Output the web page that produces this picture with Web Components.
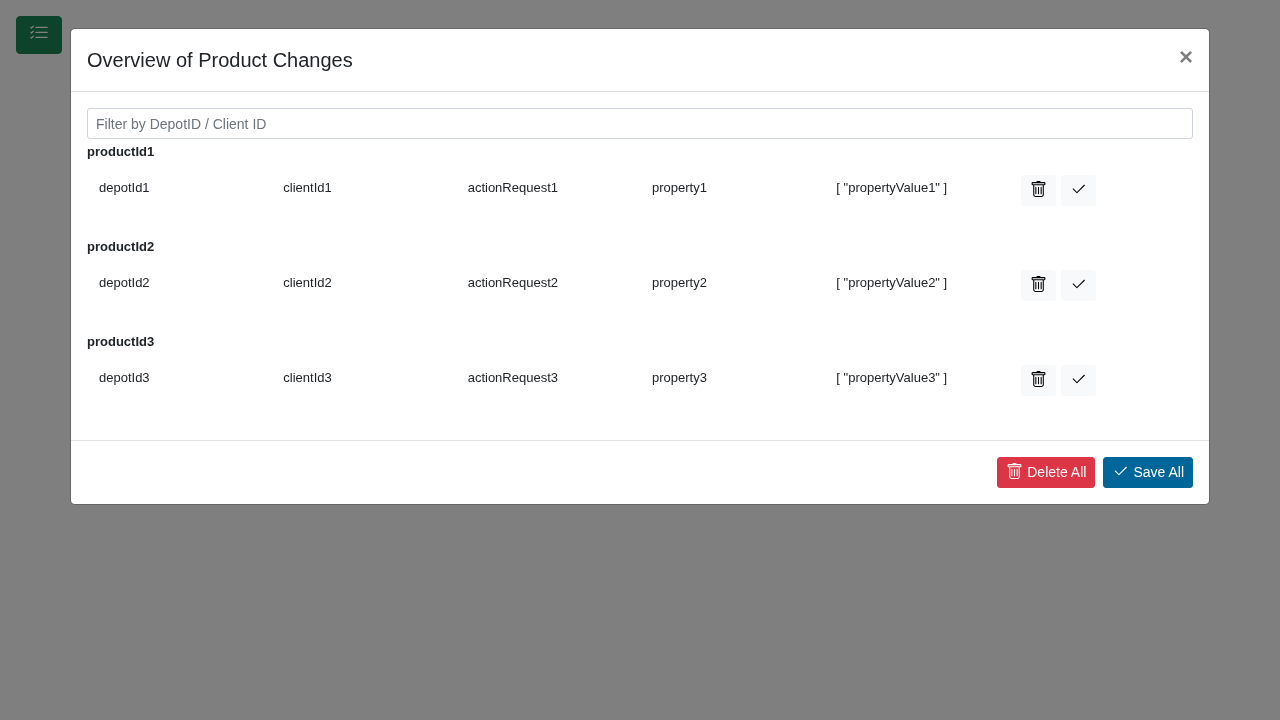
<!DOCTYPE html>
<html lang="en">
<head>
<meta charset="utf-8">
<meta name="viewport" content="width=device-width, initial-scale=1">
<title>Product Changes</title>
<style>
  body {
    margin: 0;
    padding: 16px;
    background: #fff;
    color: #212529;
    font: 16px/24px "Liberation Sans", Arial, sans-serif;
  }
</style>
</head>
<body>
<ui-button variant="success" label="Show product changes"><ui-icon name="list-check" size="large"></ui-icon></ui-button>

<modal-dialog heading="Overview of Product Changes">
  <filter-field placeholder="Filter by DepotID / Client ID"></filter-field>
  <product-group index="1"></product-group>
  <product-group index="2"></product-group>
  <product-group index="3"></product-group>
  <ui-button slot="footer" size="small" variant="danger"><ui-icon name="trash" leading></ui-icon>Delete All</ui-button>
  <ui-button slot="footer" size="small" variant="primary"><ui-icon name="check" leading></ui-icon>Save All</ui-button>
</modal-dialog>

<script>
  const define = (name, render) => customElements.define(name, class extends HTMLElement {
    connectedCallback() {
      if (this.shadowRoot) return;
      const template = document.createElement('template');
      template.innerHTML = render(this);
      this.attachShadow({ mode: 'open' }).append(template.content.cloneNode(true));
    }
  });

  const icons = {
    'trash': 'M5.5 5.5A.5.5 0 0 1 6 6v6a.5.5 0 0 1-1 0V6a.5.5 0 0 1 .5-.5zm2.5 0a.5.5 0 0 1 .5.5v6a.5.5 0 0 1-1 0V6a.5.5 0 0 1 .5-.5zm3 .5a.5.5 0 0 0-1 0v6a.5.5 0 0 0 1 0V6zM14.5 3a1 1 0 0 1-1 1H13v9a2 2 0 0 1-2 2H5a2 2 0 0 1-2-2V4h-.5a1 1 0 0 1-1-1V2a1 1 0 0 1 1-1H6a1 1 0 0 1 1-1h2a1 1 0 0 1 1 1h3.5a1 1 0 0 1 1 1v1zM4.118 4 4 4.059V13a1 1 0 0 0 1 1h6a1 1 0 0 0 1-1V4.059L11.882 4H4.118zM2.5 3V2h11v1h-11z',
    'check': 'M13.854 3.646a.5.5 0 0 1 0 .708l-7 7a.5.5 0 0 1-.708 0l-3.5-3.5a.5.5 0 1 1 .708-.708L6.5 10.293l6.646-6.647a.5.5 0 0 1 .708 0z',
    'list-check': 'M5 11.5a.5.5 0 0 1 .5-.5h9a.5.5 0 0 1 0 1h-9a.5.5 0 0 1-.5-.5zm0-4a.5.5 0 0 1 .5-.5h9a.5.5 0 0 1 0 1h-9a.5.5 0 0 1-.5-.5zm0-4a.5.5 0 0 1 .5-.5h9a.5.5 0 0 1 0 1h-9a.5.5 0 0 1-.5-.5zM3.854 2.146a.5.5 0 0 1 0 .708l-1.5 1.5a.5.5 0 0 1-.708 0l-.5-.5a.5.5 0 1 1 .708-.708L2 3.293l1.146-1.147a.5.5 0 0 1 .708 0zm0 4a.5.5 0 0 1 0 .708l-1.5 1.5a.5.5 0 0 1-.708 0l-.5-.5a.5.5 0 1 1 .708-.708L2 7.293l1.146-1.147a.5.5 0 0 1 .708 0zm0 4a.5.5 0 0 1 0 .708l-1.5 1.5a.5.5 0 0 1-.708 0l-.5-.5a.5.5 0 0 1 .708-.708l.146.147 1.146-1.147a.5.5 0 0 1 .708 0z'
  };

  define('ui-icon', el => `
    <style>
      :host { display: inline-block; width: 17px; height: 17px; vertical-align: -3px; }
      :host([size="large"]) { width: 20px; height: 20px; vertical-align: -2px; }
      :host([leading]) { margin-right: 4px; }
      svg { display: block; width: 100%; height: 100%; }
    </style>
    <svg viewBox="0 0 16 16" fill="currentColor" fill-rule="evenodd" aria-hidden="true"><path d="${icons[el.getAttribute('name')]}"/></svg>`);

  define('ui-button', el => `
    <style>
      :host { display: inline-block; vertical-align: top; }
      button {
        display: block; box-sizing: border-box; height: 38px; margin: 0; padding: 6px 12px;
        border: 1px solid transparent; border-radius: 4px;
        font: inherit; color: #fff; text-align: center; white-space: nowrap; cursor: pointer;
      }
      button.success { background: #198754; border-color: #198754; }
      button.danger { background: #dc3545; border-color: #dc3545; }
      button.primary { background: #069; border-color: #069; }
      button.light { background: #f8f9fa; border-color: #f8f9fa; color: #000; }
      button.small { height: 31px; padding: 4px 8px; font-size: 14px; line-height: 21px; border-radius: 3px; }
    </style>
    <button type="button" class="${el.getAttribute('variant')} ${el.getAttribute('size') || ''}"
      ${el.hasAttribute('label') ? `aria-label="${el.getAttribute('label')}"` : ''}><slot></slot></button>`);

  define('filter-field', el => `
    <style>
      :host { display: block; }
      input {
        display: block; box-sizing: border-box; width: 100%; height: 31px; margin: 0; padding: 4px 8px;
        border: 1px solid #ced4da; border-radius: 3px; background: #fff;
        font: inherit; font-size: 14px; line-height: 21px; color: #495057;
      }
      input::placeholder { color: #6c757d; opacity: 1; }
    </style>
    <input type="text" aria-label="${el.getAttribute('placeholder')}" placeholder="${el.getAttribute('placeholder')}">`);

  define('product-group', el => {
    const n = el.getAttribute('index');
    return `
    <style>
      :host { display: block; }
      h6 { height: 24px; margin: 0; font: inherit; font-weight: 700; }
      small { font-size: 13px; }
      table { width: 100%; margin: 0 0 16px; table-layout: fixed; border-collapse: collapse; }
      td { padding: 12px; vertical-align: top; text-align: left; }
      .actions { display: flex; gap: 5px; }
    </style>
    <h6 id="name"><small>productId${n}</small></h6>
    <table aria-labelledby="name">
      <tbody>
        <tr>
          <td><small>depotId${n}</small></td>
          <td><small>clientId${n}</small></td>
          <td><small>actionRequest${n}</small></td>
          <td><small>property${n}</small></td>
          <td><small>[ "propertyValue${n}" ]</small></td>
          <td>
            <div class="actions">
              <ui-button size="small" variant="light" label="Delete change"><ui-icon name="trash"></ui-icon></ui-button>
              <ui-button size="small" variant="light" label="Save change"><ui-icon name="check"></ui-icon></ui-button>
            </div>
          </td>
        </tr>
      </tbody>
    </table>`;
  });

  define('modal-dialog', el => `
    <style>
      :host { display: block; position: fixed; inset: 0; overflow: auto; background: rgba(0, 0, 0, .5); }
      section {
        box-sizing: border-box; max-width: 1140px; margin: 28px auto;
        background: #fff; background-clip: padding-box;
        border: 1px solid rgba(0, 0, 0, .2); border-radius: 5px;
      }
      header { display: flex; align-items: flex-start; justify-content: space-between; padding: 16px; border-bottom: 1px solid #dee2e6; }
      h5 { margin: 0; font-size: 20px; line-height: 30px; font-weight: 400; }
      .close {
        margin: 0; padding: 0; border: 0; background: none; opacity: .5; cursor: pointer;
        font: inherit; font-size: 24px; line-height: 24px; font-weight: 700; color: #000; text-shadow: 0 1px 0 #fff;
      }
      .body { padding: 16px; }
      footer { display: flex; justify-content: flex-end; gap: 8px; padding: 16px; border-top: 1px solid #dee2e6; }
    </style>
    <section role="dialog" aria-modal="true" aria-labelledby="heading">
      <header>
        <h5 id="heading">${el.getAttribute('heading')}</h5>
        <button type="button" class="close" aria-label="Close">×</button>
      </header>
      <div class="body"><slot></slot></div>
      <footer><slot name="footer"></slot></footer>
    </section>`);
</script>
</body>
</html>
